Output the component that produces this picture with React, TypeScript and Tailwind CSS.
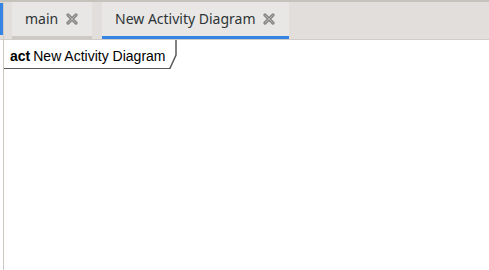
import React from 'react';

const CloseIcon = () => (
  <svg width="12" height="12" viewBox="0 0 12 12" className="shrink-0">
    <path d="M2 2 L10 10 M10 2 L2 10" stroke="#8a8986" strokeWidth="3.2" strokeLinecap="round" />
    <path d="M2.5 2.5 L9.5 9.5 M9.5 2.5 L2.5 9.5" stroke="#b4b2ae" strokeWidth="1" strokeLinecap="round" />
  </svg>
);

const Tab = ({ title, active, width }: { title: string; active?: boolean; width: string }) => (
  <div
    className={`${width} h-full flex items-center justify-between bg-[#e8e7e5] border-b-[3px] pl-[13px] pr-[14px] ${
      active ? 'border-[#3584e4]' : 'border-[#cdc9c4]'
    }`}
  >
    <span className="text-[14px] text-[#2e3436] leading-none pb-[1px]">{title}</span>
    <CloseIcon />
  </div>
);

const App = () => {
  return (
    <div className="w-[489px] h-[270px] flex flex-col bg-white overflow-hidden" style={{ fontFamily: '"Noto Sans", sans-serif' }}>
      <div className="h-[2px] bg-[#c6c2bc]" />
      <div className="h-[38px] flex bg-[#e1dedb] border-b border-[#d0ccc7]">
        <div className="w-[3px] h-[32px] mt-[1px] bg-[#3584e4]" />
        <div className="w-[1px] bg-[#cfcbc6]" />
        <div className="flex gap-[10px] pl-[8px] h-full">
          <Tab title="main" width="w-[80px]" />
          <Tab title="New Activity Diagram" width="w-[187px]" active />
        </div>
      </div>
      <div className="flex-1 ml-[3px] border-l border-[#cdc7c2] bg-white">
        <div className="flex items-stretch h-[29px]" style={{ fontFamily: '"Liberation Sans", sans-serif' }}>
          <div className="flex items-center pl-[6px] pr-[3px] border-b-[1.5px] border-[#5a5a5a] text-[14px] text-black leading-none pt-[4px]">
            <span className="font-bold">act</span>
            <span className="ml-[3px]">New Activity Diagram</span>
          </div>
          <svg width="8" height="29" viewBox="0 0 8 29" className="shrink-0">
            <polyline points="0,28.2 1,28.2 7,15 7,0" fill="none" stroke="#5a5a5a" strokeWidth="1.5" />
          </svg>
        </div>
      </div>
    </div>
  );
};

export default App;
